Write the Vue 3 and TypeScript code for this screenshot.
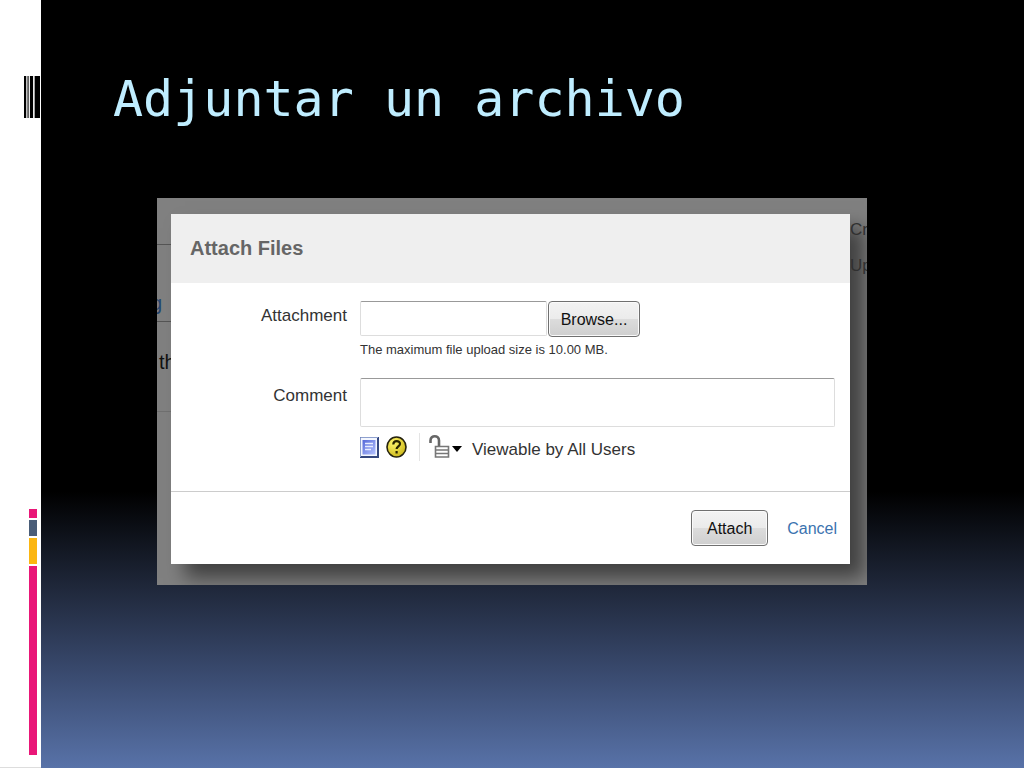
<script setup lang="ts">
import { ref } from 'vue'

const title = 'Adjuntar un archivo'
const fileName = ref('')
const comment = ref('')
</script>

<template>
  <div class="slide">
    <aside class="rail" aria-hidden="true">
      <svg class="barcode" width="16" height="42" viewBox="0 0 16 42">
        <path d="M0 0h2v42H0zM3.500 0h1.200v42H3.500zM6 0h3v42H6zM10.800 0H16v42h-5.200z" fill="#000" />
        <path d="M2 0h.6v42H2zM4.700 0h.5v42h-.5zM9.800 0h1v42h-1z" fill="#999" />
      </svg>
      <div class="stripes">
        <span class="stripe pink small"></span>
        <span class="stripe slate"></span>
        <span class="stripe amber"></span>
        <span class="stripe pink tall"></span>
      </div>
    </aside>

    <main class="stage">
      <h1>{{ title }}</h1>

      <div class="capture">
        <div class="behind left">
          <div class="band first"></div>
          <div class="band second"><span class="link">g</span></div>
          <div class="band third"><span class="word">th</span></div>
        </div>

        <form class="dialog" @submit.prevent>
          <header><h2>Attach Files</h2></header>

          <div class="fields">
            <label for="attachment">Attachment</label>
            <div class="control">
              <div class="picker">
                <input id="attachment" v-model="fileName" type="text" />
                <button type="button" class="browse">Browse...</button>
              </div>
              <p class="hint">The maximum file upload size is 10.00 MB.</p>
            </div>

            <label for="comment" class="low">Comment</label>
            <div class="control">
              <textarea id="comment" v-model="comment" rows="1"></textarea>
              <div class="tools">
                <button type="button" class="plain" aria-label="Preview">
                  <svg width="20" height="22" viewBox="0 0 20 22">
                    <defs>
                      <linearGradient id="page" x1="0" y1="0" x2="1" y2="1">
                        <stop offset="0" stop-color="#5568d8" />
                        <stop offset="1" stop-color="#b4c2ff" />
                      </linearGradient>
                    </defs>
                    <path d="M0 1h19v21H0z" fill="#34477f" />
                    <path d="M1 2h16v18H1z" fill="#f4f7ff" />
                    <path d="M2.500 4h13v14.500h-13z" fill="url(#page)" />
                    <path d="M5 7.500h8M5 10.500h8M5 13.500h6" stroke="#e8edff" stroke-width="1.500" />
                    <path d="M.5 21V1.500H18" fill="none" stroke="#8ea0ce" />
                  </svg>
                </button>
                <button type="button" class="plain help" aria-label="Help">
                  <svg width="22" height="22" viewBox="0 0 22 22">
                    <defs>
                      <radialGradient id="gold" cx=".35" cy=".3" r=".8">
                        <stop offset="0" stop-color="#fff56c" />
                        <stop offset="1" stop-color="#c9b414" />
                      </radialGradient>
                    </defs>
                    <ellipse cx="10.500" cy="11" rx="9.500" ry="10" fill="url(#gold)" stroke="#25220d" stroke-width="1.600" />
                    <path d="M7.300 8.500C7.300 3.800 14.200 4.200 14 8c-.1 2.300-3.400 2.500-3.400 5M10.600 15v2.600" fill="none" stroke="#282300" stroke-width="2.200" />
                  </svg>
                </button>
                <button type="button" class="plain viewers">
                  <svg width="34" height="24" viewBox="0 0 34 24">
                    <path d="M1.500 8V5.500C1.500-.1 10-.1 10 5.500V11" fill="none" stroke="#666" stroke-width="2.600" />
                    <path d="M6.500 11.500h13v10.500h-13z" fill="#fff" stroke="#777" stroke-width="1.600" />
                    <path d="M7 15h12M7 18.500h12" stroke="#777" stroke-width="1.400" />
                    <path d="M23 11h10l-5 6z" fill="#000" />
                  </svg>
                  <span class="caption">Viewable by All Users</span>
                </button>
              </div>
            </div>
          </div>

          <footer>
            <button type="submit" class="attach">Attach</button>
            <a href="#">Cancel</a>
          </footer>
        </form>

        <div class="behind right">
          <span>Cr</span>
          <span>Up</span>
        </div>
      </div>
    </main>
  </div>
</template>

<style>
body {
  margin: 0;
}
</style>

<style scoped>
* {
  box-sizing: border-box;
}
.slide {
  display: flex;
  min-height: 100vh;
  font-family: "Liberation Sans", Arial, sans-serif;
  font-size: 17px;
  color: #333;
}
.rail {
  width: 41px;
  flex: none;
  display: flex;
  flex-direction: column;
  justify-content: space-between;
  align-items: flex-end;
  padding: 76px 0 12px;
  background: #fff;
  border-bottom: 1px solid #ddd;
}
.barcode {
  display: block;
  margin-right: 1px;
}
.stripes {
  display: flex;
  flex-direction: column;
  gap: 2px;
  margin-right: 4px;
}
.stripe {
  width: 8px;
}
.pink {
  background: #e91778;
}
.small {
  height: 9px;
}
.slate {
  height: 16px;
  background: #4a5d78;
}
.amber {
  height: 26px;
  background: #fbb612;
}
.tall {
  height: 189px;
}
.stage {
  flex: 1;
  min-width: 0;
  padding: 67px 157px 0 72px;
  background: linear-gradient(#000 0, #000 64%, #1e2638 76%, #3a4b70 88%, #5872a8 100%);
}
h1 {
  margin: 0 0 67px;
  font: 400 50px/64px "DejaVu Sans Mono", monospace;
  color: #bfedff;
  white-space: nowrap;
}
.capture {
  display: grid;
  grid-template-columns: 14px 1fr 17px;
  margin-left: 44px;
  overflow: hidden;
  background: #808080;
}
.behind {
  overflow: hidden;
  font-size: 20px;
  line-height: 24px;
  white-space: nowrap;
}
.band {
  display: flex;
  align-items: flex-end;
  border-bottom: 1px solid #555;
}
.first {
  height: 47px;
}
.second {
  height: 77px;
  padding-bottom: 6px;
  justify-content: flex-end;
  padding-right: 9px;
}
.third {
  height: 90px;
  padding: 0 0 37px 2px;
  border-color: #707070;
}
.link {
  color: #24466e;
}
.word {
  color: #111;
}
.right {
  display: flex;
  flex-direction: column;
  gap: 12px;
  padding-top: 20px;
  font-size: 17px;
  color: #303030;
  position: relative;
}
.dialog {
  position: relative;
  margin: 16px 0 21px;
  background: #fff;
  box-shadow: 14px 14px 18px rgba(0, 0, 0, 0.5);
}
header {
  padding: 20px 19px;
  background: #efefef;
}
h2 {
  margin: 0;
  font-size: 20px;
  line-height: 29px;
  color: #666;
}
.fields {
  display: grid;
  grid-template-columns: 176px 1fr;
  column-gap: 13px;
  row-gap: 18px;
  padding: 18px 15px 30px 0;
}
label {
  padding-top: 3px;
  line-height: 24px;
  text-align: right;
}
.low {
  padding-top: 6px;
}
.picker {
  display: flex;
  gap: 1px;
}
input,
textarea {
  display: block;
  border: 1px solid #ddd;
  border-top-color: #999;
  border-radius: 2px;
  background: #fff;
  font: inherit;
}
input {
  width: 187px;
  height: 35px;
}
textarea {
  width: 100%;
  height: 49px;
  resize: none;
}
button {
  font: inherit;
  color: #111;
}
.browse,
.attach {
  height: 36px;
  padding: 2px 0 0;
  border: 1px solid #707070;
  border-radius: 4px;
  background: linear-gradient(#f3f3f3 0, #ebebeb 50%, #dcdcdc 51%, #cfcfcf 100%);
  box-shadow: inset 0 0 0 1px #fafafa;
  font-size: 16px;
}
.browse {
  width: 92px;
}
.attach {
  width: 77px;
}
.hint {
  margin: 3px 0 0;
  font-size: 13px;
  line-height: 20px;
}
.tools {
  display: flex;
  align-items: center;
  padding-top: 6px;
}
.plain {
  display: flex;
  align-items: center;
  padding: 0;
  border: 0;
  background: none;
  color: #333;
}
.plain svg {
  display: block;
}
.help {
  margin-left: 6px;
}
.viewers {
  height: 28px;
  margin-left: 11px;
  padding-left: 9px;
  gap: 9px;
  border-left: 1px solid #e4e4e4;
}
.caption {
  padding-top: 6px;
}
footer {
  display: flex;
  justify-content: flex-end;
  align-items: center;
  gap: 19px;
  padding: 18px 13px;
  border-top: 1px solid #ccc;
}
a {
  padding-top: 2px;
  font-size: 16px;
  color: #3b73af;
  text-decoration: none;
}
</style>
